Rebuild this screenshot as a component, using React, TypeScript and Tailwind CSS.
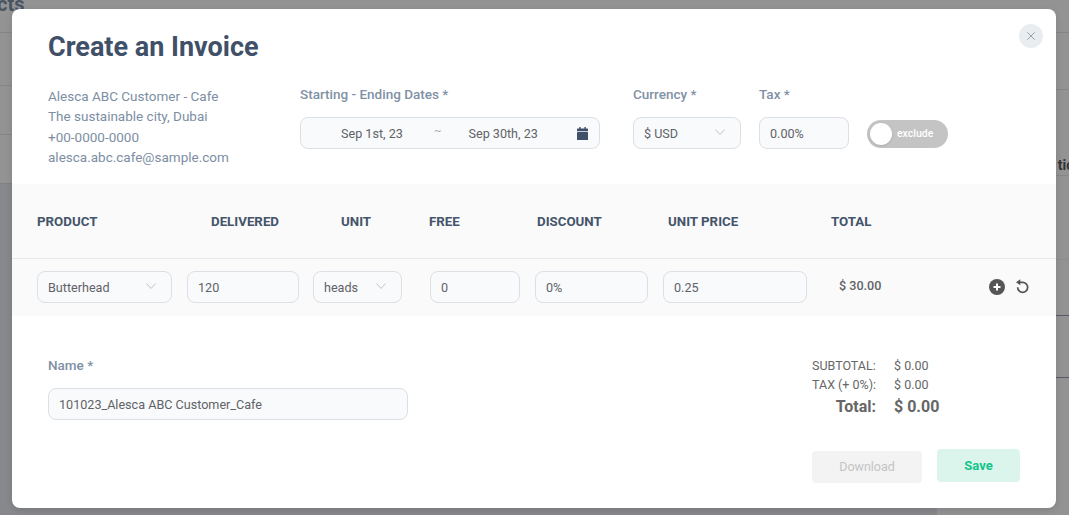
import { X } from "lucide-react";

const font = { fontFamily: "Roboto, 'Liberation Sans', sans-serif" };

const fieldClass =
  "h-8 rounded-lg border border-[#dcdfe4] bg-[#f9fafb] text-[12.6px] text-[#5f6368] flex items-center";

const labelClass = "block text-[13.5px] leading-[20px] font-medium text-[#8091a5]";

function Field({ value, className }: { value: string; className: string }) {
  return <div className={`${fieldClass} pl-[10px] pt-[3px] ${className}`}>{value}</div>;
}

function Select({ value, className }: { value: string; className: string }) {
  return (
    <div className={`${fieldClass} pl-[10px] pr-[15px] pt-[2px] justify-between ${className}`}>
      <span>{value}</span>
      <svg viewBox="0 0 10 6" className="w-[10px] h-[6px] -mt-[5px]" fill="none" stroke="#b4b8bf" strokeWidth="0.8">
        <path d="M0.5 0.5 5 5.5 9.5 0.5" />
      </svg>
    </div>
  );
}

function CalendarIcon() {
  return (
    <svg viewBox="0 0 11 13" className="w-[11px] h-[13px]" fill="#3f5068">
      <rect x="2.2" y="0" width="1.4" height="2.5" />
      <rect x="7.4" y="0" width="1.4" height="2.5" />
      <rect x="0" y="1.5" width="11" height="2.8" rx="0.6" />
      <rect x="0" y="4.9" width="11" height="8.1" rx="0.6" />
    </svg>
  );
}

function Backdrop() {
  return (
    <div className="flex h-[515px] bg-[#939393] overflow-hidden">
      <div className="w-[937px]">
        <div className="h-[33px] border-b border-[#868686] -ml-[3px] text-[20px] leading-[8px] font-bold text-[#4a5563]">
          cts
        </div>
        <div className="h-[53px] border-b border-[#868686]" />
        <div className="h-[49px] border-b border-[#868686]" />
        <div className="h-[49px] border-b border-[#7f8084]" />
        <div className="h-[331px] bg-[#87888c]" />
      </div>
      <div className="flex-1">
        <div className="h-[33px] border-b border-[#868686]" />
        <div className="h-[57px] border-b border-[#868686]" />
        <div className="h-[86px] border-b border-[#868686] flex items-end justify-end -mr-[13px] pb-[3px] text-[14px] leading-[14px] font-bold text-[#333]">
          tion
        </div>
        <div className="h-[84px] border-b border-[#8b8c94]" />
        <div className="h-[56px] border-b border-[#555a68]" />
        <div className="h-[62px] border-b border-[#555a68]" />
      </div>
    </div>
  );
}

export default function App() {
  return (
    <div className="relative w-[1069px] h-[515px] overflow-hidden" style={font}>
      <Backdrop />
      <div className="absolute left-3 top-[9px] w-[1044px] h-[499px] rounded-lg bg-white shadow-[0_2px_6px_rgba(0,0,0,0.12)]">
        <button className="absolute right-[13px] top-[15px] w-6 h-6 rounded-full bg-[#e9edf0] flex items-center justify-center">
          <X className="w-[14px] h-[14px] text-[#7b8794]" strokeWidth={1.25} />
        </button>

        <h1 className="pl-9 pt-[21px] text-[27px] leading-[34px] font-bold text-[#3f5068]">Create an Invoice</h1>

        <div className="flex pl-9 mt-[20px] h-[100px]">
          <div className="w-[252px] pt-[2px] text-[13.5px] leading-[20.4px] text-[#7d8ea3]">
            <p>Alesca ABC Customer - Cafe</p>
            <p>The sustainable city, Dubai</p>
            <p>+00-0000-0000</p>
            <p>alesca.abc.cafe@sample.com</p>
          </div>
          <div className="w-[300px]">
            <label className={labelClass}>Starting - Ending Dates *</label>
            <div className={`${fieldClass} mt-[13px] pl-[40px] pr-[11px]`}>
              <span className="w-[62px] pt-[2px] whitespace-nowrap">Sep 1st, 23</span>
              <span className="ml-[31px] -mt-[4px] text-[11px] text-[#a4a9af]">~</span>
              <span className="ml-[27px] pt-[2px] whitespace-nowrap">Sep 30th, 23</span>
              <span className="ml-auto"><CalendarIcon /></span>
            </div>
          </div>
          <div className="w-[108px] ml-[33px]">
            <label className={labelClass}>Currency *</label>
            <Select value="$ USD" className="mt-[13px]" />
          </div>
          <div className="w-[90px] ml-[18px]">
            <label className={labelClass}>Tax *</label>
            <Field value="0.00%" className="mt-[13px]" />
          </div>
          <div className="ml-[18px] mt-[36px] w-[81px] h-7 rounded-full bg-[#c4c4c4] flex items-center pl-[3px]">
            <span className="w-[22px] h-[22px] rounded-full bg-white shadow" />
            <span className="ml-[5px] text-[10.5px] font-medium text-white">exclude</span>
          </div>
        </div>

        <div className="h-[132px] bg-[#fafafa]">
          <div className="h-[75px] border-b border-[#e8e8e8] flex items-center pl-[25px] pt-px text-[13.3px] font-bold text-[#44546a]">
            <span className="w-[174px]">PRODUCT</span>
            <span className="w-[130px]">DELIVERED</span>
            <span className="w-[88px]">UNIT</span>
            <span className="w-[108px]">FREE</span>
            <span className="w-[131px]">DISCOUNT</span>
            <span className="w-[163px]">UNIT PRICE</span>
            <span>TOTAL</span>
          </div>
          <div className="h-[57px] flex items-center pl-[25px] pb-[2px]">
            <Select value="Butterhead" className="w-[135px] pt-[3px]" />
            <Field value="120" className="w-[112px] ml-[15px]" />
            <Select value="heads" className="w-[89px] ml-[14px] pt-[3px]" />
            <Field value="0" className="w-[90px] ml-[28px]" />
            <Field value="0%" className="w-[113px] ml-[15px]" />
            <Field value="0.25" className="w-[144px] ml-[15px]" />
            <span className="ml-[32px] w-[43px] text-[12.6px] font-medium text-[#5f6368]">$ 30.00</span>
            <svg viewBox="0 0 16 16" className="ml-[107px] w-4 h-4">
              <circle cx="8" cy="8" r="8" fill="#555" />
              <path d="M8 4.5v7M4.5 8h7" stroke="#fff" strokeWidth="2" />
            </svg>
            <svg viewBox="0 0 24 24" className="ml-[9px] w-4 h-4" fill="none" stroke="#555" strokeWidth="2.6">
              <path d="M8 5h5a7.5 7.5 0 1 1-7.5 7.5" />
              <path d="M9.5 0.5 3 5l6.5 4.5z" fill="#555" stroke="none" />
            </svg>
          </div>
        </div>

        <div className="flex pl-9 pr-9 pt-[39px]">
          <div className="w-[360px]">
            <label className={labelClass}>Name *</label>
            <Field value="101023_Alesca ABC Customer_Cafe" className="mt-[13px]" />
          </div>
          <div className="ml-auto w-[208px] pt-[1px] text-[#666]">
            <div className="grid grid-cols-[64px_1fr] gap-x-[18px] text-[12.5px] leading-[19px]">
              <span className="whitespace-nowrap">SUBTOTAL:</span>
              <span>$ 0.00</span>
              <span className="whitespace-nowrap">TAX (+ 0%):</span>
              <span>$ 0.00</span>
              <span className="text-[16px] leading-[25px] font-bold text-right">Total:</span>
              <span className="text-[16px] leading-[25px] font-bold">$ 0.00</span>
            </div>
            <div className="flex items-start mt-[30px]">
              <button className="w-[110px] h-8 mt-[2px] rounded bg-[#f3f3f3] text-[12.5px] text-[#c4c4c4]">Download</button>
              <button className="w-[83px] h-[33px] ml-[15px] rounded bg-[#dbf5ec] text-[13px] font-bold text-[#12c48b]">Save</button>
            </div>
          </div>
        </div>
      </div>
    </div>
  );
}
